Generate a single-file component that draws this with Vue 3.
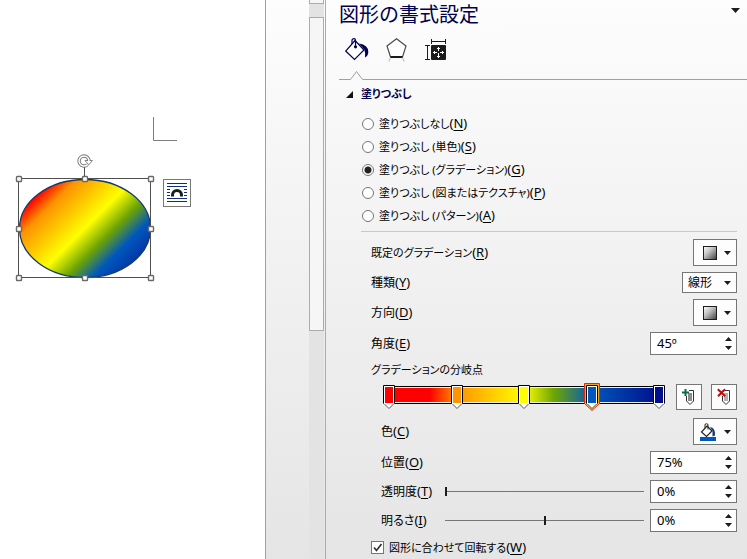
<script setup>
import { ref } from 'vue'

const fillOptions = [
  { id: 'none', label: '塗りつぶしなし', key: 'N' },
  { id: 'solid', label: '塗りつぶし (単色)', key: 'S' },
  { id: 'gradient', label: '塗りつぶし (グラデーション)', key: 'G' },
  { id: 'picture', label: '塗りつぶし (図またはテクスチャ)', key: 'P' },
  { id: 'pattern', label: '塗りつぶし (パターン)', key: 'A' },
]
const fill = ref('gradient')

const stops = [
  { at: 0, color: '#ff0000' },
  { at: 25, color: '#ff9300' },
  { at: 50, color: '#ffff00' },
  { at: 75, color: '#0057bd' },
  { at: 100, color: '#00108c' },
]
const selectedStop = ref(3)

const kind = ref('線形')
const angle = ref('45º')
const position = ref('75%')
const transparency = ref(0)
const brightness = ref(0)
const rotateWithShape = ref(true)

const handles = [
  [19, 179], [85, 179], [151, 179],
  [19, 229], [151, 229],
  [19, 278], [85, 278], [151, 278],
]
</script>

<template>
  <div class="app">
    <main class="page">
      <svg class="drawing" width="200" height="300" viewBox="0 0 200 300" role="img" aria-label="楕円">
        <defs>
          <linearGradient id="rainbow" gradientUnits="userSpaceOnUse" x1="28" y1="171" x2="142" y2="285">
            <stop offset="0" stop-color="#ff0000" />
            <stop offset="0.15" stop-color="#ff0800" />
            <stop offset="0.25" stop-color="#ff9300" />
            <stop offset="0.5" stop-color="#ffff00" />
            <stop offset="0.63" stop-color="#6ea600" />
            <stop offset="0.75" stop-color="#0057bd" />
            <stop offset="1" stop-color="#00108c" />
          </linearGradient>
        </defs>
        <path d="M153.5 117V140.500H177" fill="none" stroke="#7d7d7d" />
        <ellipse cx="85" cy="228.500" rx="65.500" ry="49" fill="url(#rainbow)" stroke="#123a68" stroke-width="1.300" />
        <rect x="18.500" y="178.500" width="132" height="99" fill="none" stroke="#4f4f4f" />
        <path d="M84.500 167V176" stroke="#4f4f4f" />
        <path d="M87.500 164.600A5 5 0 1 1 88.800 159.500V161" fill="none" stroke="#777" stroke-width="3.400" />
        <path d="M85 160.500H92.500L88.800 164.800Z" fill="#fff" stroke="#777" stroke-width="0.900" />
        <path d="M87.500 164.600A5 5 0 1 1 88.800 159.500V161.500" fill="none" stroke="#fff" stroke-width="1.500" />
        <rect
          v-for="([x, y], i) in handles" :key="i"
          :x="x - 2.5" :y="y - 2.5" width="5" height="5" rx="0.800" fill="#fff" stroke="#6a6a6a" stroke-width="1.400"
        />
      </svg>
      <button class="layout-button" type="button" aria-label="レイアウト オプション">
        <svg width="20" height="20" viewBox="0 0 20 20">
          <path d="M0 .5H20M0 3.500H20M0 6.500H3M17 6.500H20M0 9.500H3M17 9.500H20M0 12.500H3M17 12.500H20M0 15.500H20M0 18.500H20" stroke="#0b2f80" />
          <path d="M5.500 13.500V12A4.500 4.500 0 0 1 14.500 12V13.500" fill="none" stroke="#1c1c1c" stroke-width="3" />
        </svg>
      </button>
    </main>

    <div class="gutter"></div>
    <div class="scrollbar">
      <div class="thumb thumb-top"></div>
      <div class="thumb thumb-main"></div>
    </div>

    <aside class="panel">
      <header class="panel-head">
        <h1>図形の書式設定</h1>
        <button class="bare" type="button" aria-label="作業ウィンドウ オプション">
          <svg width="9" height="5" viewBox="0 0 9 5"><path d="M0 0H9L4.500 5Z" fill="#1c1c1c" /></svg>
        </button>
      </header>

      <nav class="tabs">
        <button class="bare" type="button" aria-label="塗りつぶしと線">
          <svg width="24" height="24" viewBox="0 0 24 24">
            <path d="M10 2.500L19 12L9.500 21.500L.7 13Z" fill="#fff" stroke="#00004e" stroke-width="1.200" />
            <path d="M7 6V2.500Q7 .7 9 .7Q10.500 .7 10.500 2.500V8" fill="none" stroke="#00004e" stroke-width="1.200" />
            <circle cx="10.500" cy="8.800" r="1.600" fill="#00004e" />
            <path d="M14 5.500Q23.500 7 23.300 14Q23.300 17.500 20 19.500Q20.700 15 19.300 11.500Z" fill="#00004e" />
          </svg>
        </button>
        <button class="bare" type="button" aria-label="効果">
          <svg width="24" height="24" viewBox="0 0 24 24">
            <path d="M11.500 .8L21 8L17.500 19H5.500L2 8Z" fill="#fff" stroke="#4a4a4a" stroke-width="1.200" />
            <path d="M5.500 19H17.500" stroke="#1c1c1c" stroke-width="2" />
            <path d="M5.200 20L4 23.500M17.800 20L19 23.500" stroke="#b5b5b5" />
          </svg>
        </button>
        <button class="bare" type="button" aria-label="レイアウトとプロパティ">
          <svg width="24" height="24" viewBox="0 0 24 24">
            <path d="M6.500 1V6M20.500 1V6M6.500 3.500H20.500M0 7.500H5M0 21.500H5M2.500 7.500V21.500" fill="none" stroke="#1c1c1c" />
            <rect x="6" y="7" width="15" height="15" rx="1" fill="#1c1c1c" />
            <path d="M13.500 9V13M13.500 15V20M8 14.500H12M15 14.500H19M12 10.500H15M12 18.500H15M9.500 13V16M17.500 13V16" stroke="#fff" />
          </svg>
        </button>
      </nav>
      <div class="tab-line">
        <i class="lead"></i>
        <svg width="13" height="10" viewBox="0 0 13 10"><path d="M0 9.500H.5L6.500 1.500L12.500 9.500H13" fill="none" stroke="#a0a0a0" /></svg>
        <i class="rest"></i>
      </div>

      <h2>
        <svg width="7" height="7" viewBox="0 0 7 7"><path d="M7 0V7H0Z" fill="#111" /></svg>
        塗りつぶし
      </h2>

      <div class="radios" role="radiogroup" aria-label="塗りつぶし">
        <label v-for="o in fillOptions" :key="o.id">
          <input v-model="fill" type="radio" name="fill" :value="o.id">
          <span class="long">{{ o.label }}<span class="key">(<u>{{ o.key }}</u>)</span></span>
        </label>
      </div>

      <hr>

      <div class="fields">
        <div class="row">
          <label class="long" for="preset">既定のグラデーション<span class="key">(<u>R</u>)</span></label>
          <button id="preset" class="drop" type="button">
            <svg class="swatch" width="14" height="14" viewBox="0 0 14 14">
              <defs>
                <linearGradient id="grey" x1="0" y1="0" x2="1" y2="1">
                  <stop offset="0" stop-color="#fff" />
                  <stop offset="0.4" stop-color="#c4c4c4" />
                  <stop offset="1" stop-color="#3c3c3c" />
                </linearGradient>
              </defs>
              <rect x=".5" y=".5" width="13" height="13" fill="url(#grey)" stroke="#1c1c1c" />
            </svg>
            <svg width="7" height="4" viewBox="0 0 7 4"><path d="M0 0H7L3.500 4Z" fill="#1c1c1c" /></svg>
          </button>
        </div>

        <div class="row">
          <label for="kind">種類<span class="key">(<u>Y</u>)</span></label>
          <span class="select">
            <select id="kind" v-model="kind">
              <option>線形</option>
              <option>放射</option>
              <option>四角</option>
            </select>
            <svg width="7" height="4" viewBox="0 0 7 4"><path d="M0 0H7L3.500 4Z" fill="#1c1c1c" /></svg>
          </span>
        </div>

        <div class="row">
          <label for="direction">方向<span class="key">(<u>D</u>)</span></label>
          <button id="direction" class="drop" type="button">
            <svg class="swatch" width="14" height="14" viewBox="0 0 14 14">
              <rect x=".5" y=".5" width="13" height="13" fill="url(#grey)" stroke="#1c1c1c" />
            </svg>
            <svg width="7" height="4" viewBox="0 0 7 4"><path d="M0 0H7L3.500 4Z" fill="#1c1c1c" /></svg>
          </button>
        </div>

        <div class="row">
          <label for="angle">角度<span class="key">(<u>E</u>)</span></label>
          <span class="spin">
            <input id="angle" v-model="angle" type="text">
            <span class="steps">
              <button class="bare" type="button" aria-label="増やす"><svg width="7" height="4" viewBox="0 0 7 4"><path d="M0 4H7L3.500 0Z" fill="#1c1c1c" /></svg></button>
              <button class="bare" type="button" aria-label="減らす"><svg width="7" height="4" viewBox="0 0 7 4"><path d="M0 0H7L3.500 4Z" fill="#1c1c1c" /></svg></button>
            </span>
          </span>
        </div>

        <div class="caption long">グラデーションの分岐点</div>

        <div class="stops-row">
          <div class="track">
            <div class="bar"></div>
            <button
              v-for="(s, i) in stops" :key="s.at" class="bare stop" type="button"
              :style="{ left: s.at + '%' }" :aria-label="'分岐点 ' + (i + 1)" @click="selectedStop = i"
            >
              <svg width="18" height="30" viewBox="0 0 18 30">
                <template v-if="i === selectedStop">
                  <path d="M1.500 1.500H16.500V21.500L9 28.500L1.500 21.500Z" fill="#ffd27a" stroke="#d82a10" />
                  <path d="M2.500 2.500H15.500V21L9 27L2.500 21Z" fill="none" stroke="#f3a41c" />
                </template>
                <path d="M3.500 21L9 26.500L14.500 21Z" fill="#fff" stroke="#444" stroke-width="0.900" />
                <path d="M3.500 21.500V3.500H14.500V21.500" fill="#fff" stroke="#000" />
                <rect x="4" y="20" width="10" height="2" fill="#fff" />
                <rect x="5" y="5" width="8" height="16" :fill="s.color" />
              </svg>
            </button>
          </div>
          <button class="tool" type="button" aria-label="グラデーションの分岐点を追加">
            <svg width="14" height="18" viewBox="0 0 14 18">
              <path d="M7 2.500H11.500V13L8 16.500L4.500 13V8" fill="#fff" stroke="#333" />
              <rect x="6" y="5" width="4" height="8" fill="#8c8c8c" />
              <path d="M3.500 1V8M0 4.500H7" stroke="#0b6b4c" stroke-width="2" />
            </svg>
          </button>
          <button class="tool" type="button" aria-label="グラデーションの分岐点を削除">
            <svg width="14" height="18" viewBox="0 0 14 18">
              <path d="M8 2.500H12.500V13L9 16.500L5.500 13V8" fill="#fff" stroke="#333" />
              <rect x="7" y="5" width="4" height="8" fill="#b0b0b0" />
              <path d="M.8 1.200L8.200 8.200M8 1.200L1 8.200" stroke="#c00a0a" stroke-width="2" />
            </svg>
          </button>
        </div>

        <div class="row sub">
          <label for="color">色<span class="key">(<u>C</u>)</span></label>
          <button id="color" class="drop" type="button">
            <svg width="18" height="18" viewBox="0 0 18 18">
              <path d="M8 3L13 8L7.500 13.500L2.500 9Z" fill="#fff" stroke="#222" stroke-width="1.200" />
              <path d="M6 5V2Q6 .7 7.500 .7Q9 .7 9 2V6.500" fill="none" stroke="#222" />
              <path d="M11 4Q16.500 4.500 16 12.500L13.500 13.500L13.500 8Z" fill="#123a7c" />
              <rect x="1" y="14" width="16" height="4" fill="#0057bd" />
            </svg>
            <svg width="7" height="4" viewBox="0 0 7 4"><path d="M0 0H7L3.500 4Z" fill="#1c1c1c" /></svg>
          </button>
        </div>

        <div class="row sub">
          <label for="position">位置<span class="key">(<u>O</u>)</span></label>
          <span class="spin">
            <input id="position" v-model="position" type="text">
            <span class="steps">
              <button class="bare" type="button" aria-label="増やす"><svg width="7" height="4" viewBox="0 0 7 4"><path d="M0 4H7L3.500 0Z" fill="#1c1c1c" /></svg></button>
              <button class="bare" type="button" aria-label="減らす"><svg width="7" height="4" viewBox="0 0 7 4"><path d="M0 0H7L3.500 4Z" fill="#1c1c1c" /></svg></button>
            </span>
          </span>
        </div>

        <div class="row sub">
          <label class="slider-label" for="transparency">透明度<span class="key">(<u>T</u>)</span></label>
          <input id="transparency" v-model.number="transparency" class="slider" type="range" min="0" max="100">
          <span class="spin">
            <input type="text" :value="transparency + '%'" aria-label="透明度">
            <span class="steps">
              <button class="bare" type="button" aria-label="増やす"><svg width="7" height="4" viewBox="0 0 7 4"><path d="M0 4H7L3.500 0Z" fill="#1c1c1c" /></svg></button>
              <button class="bare" type="button" aria-label="減らす"><svg width="7" height="4" viewBox="0 0 7 4"><path d="M0 0H7L3.500 4Z" fill="#1c1c1c" /></svg></button>
            </span>
          </span>
        </div>

        <div class="row sub">
          <label class="slider-label" for="brightness">明るさ<span class="key">(<u>I</u>)</span></label>
          <input id="brightness" v-model.number="brightness" class="slider" type="range" min="-100" max="100">
          <span class="spin">
            <input type="text" :value="brightness + '%'" aria-label="明るさ">
            <span class="steps">
              <button class="bare" type="button" aria-label="増やす"><svg width="7" height="4" viewBox="0 0 7 4"><path d="M0 4H7L3.500 0Z" fill="#1c1c1c" /></svg></button>
              <button class="bare" type="button" aria-label="減らす"><svg width="7" height="4" viewBox="0 0 7 4"><path d="M0 0H7L3.500 4Z" fill="#1c1c1c" /></svg></button>
            </span>
          </span>
        </div>

        <label class="check">
          <span class="box">
            <input v-model="rotateWithShape" type="checkbox">
            <svg v-if="rotateWithShape" width="13" height="13" viewBox="0 0 13 13"><path d="M3 6.500L5.500 9.500L10.500 3" fill="none" stroke="#333" stroke-width="1.700" /></svg>
          </span>
          <span class="long">図形に合わせて回転する<span class="key">(<u>W</u>)</span></span>
        </label>
      </div>
    </aside>
  </div>
</template>

<style>
body {
  margin: 0;
}
</style>

<style scoped>
.app {
  display: grid;
  grid-template-columns: 265fr 44px 16px 422fr;
  min-height: 100vh;
  background: linear-gradient(#fdfdfd, #f3f3f3 40%, #e5e5e5);
  font: 12px/18px "Noto Sans", "Noto Sans CJK JP", sans-serif;
  font-feature-settings: "palt";
  color: #000;
}
.app *,
.app *::before {
  box-sizing: border-box;
}
button,
input,
select {
  margin: 0;
  padding: 0;
  font: inherit;
  color: inherit;
}
svg {
  display: block;
  flex: none;
}
.bare {
  display: block;
  border: 0;
  background: none;
}
.page {
  position: relative;
  background: #fff;
}
.layout-button {
  position: absolute;
  left: 163px;
  top: 179px;
  display: grid;
  place-items: center;
  width: 28px;
  height: 28px;
  border: 1px solid #777;
  background: #fff;
}
.gutter {
  border-left: 1px solid #a0a0a0;
}
.scrollbar {
  display: flex;
  flex-direction: column;
  gap: 13px;
  margin-right: 1px;
  background: #e3e3e3;
}
.thumb {
  border: 1px solid #ababab;
  background: #f6f6f6;
}
.thumb-top {
  height: 4px;
  border-top: 0;
}
.thumb-main {
  height: 314px;
}
.panel {
  border-left: 1px solid #ababab;
}
.panel-head {
  display: flex;
  justify-content: space-between;
  align-items: center;
  height: 30px;
  padding: 0 7px 0 13px;
}
.panel-head .bare {
  padding-bottom: 9px;
}
h1 {
  margin: 0;
  font-size: 20px;
  line-height: 30px;
  font-weight: 400;
  font-feature-settings: normal;
  color: #00004e;
}
.tabs {
  display: flex;
  gap: 16px;
  padding: 8px 0 8px 19px;
}
.tab-line {
  display: flex;
  align-items: flex-end;
  padding-left: 13px;
}
.lead,
.rest {
  border-bottom: 1px solid #a0a0a0;
}
.lead {
  width: 11px;
}
.rest {
  flex: 1;
}
h2 {
  display: flex;
  align-items: center;
  gap: 8px;
  margin: 4px 0 8px;
  padding-left: 20px;
  font-size: 11px;
  line-height: 20px;
  font-weight: 700;
  color: #00004e;
}
.long {
  font-size: 11px;
}
.key {
  font-size: 13px;
}
u {
  text-underline-offset: 2px;
}
.radios {
  display: grid;
  padding-left: 36px;
}
.radios label {
  display: flex;
  align-items: center;
  gap: 5px;
  height: 23px;
}
.radios input {
  appearance: none;
  width: 12px;
  height: 12px;
  border: 1px solid #767676;
  border-radius: 50%;
  background: #fff;
}
.radios input:checked {
  background: radial-gradient(#222 3px, #fff 4px);
}
hr {
  height: 1px;
  margin: 4px 10px 7px 35px;
  border: 0;
  background: #c8c8c8;
}
.fields {
  display: grid;
  gap: 6px;
  padding: 0 10px 3px 45px;
}
.row {
  display: flex;
  align-items: center;
  justify-content: space-between;
}
.sub {
  padding-left: 10px;
}
.drop {
  display: flex;
  align-items: center;
  justify-content: flex-end;
  gap: 7px;
  width: 44px;
  height: 27px;
  padding-right: 5px;
  border: 1px solid #767676;
  background: #fdfdfd;
}
.select {
  display: grid;
  grid-template-columns: 1fr;
  align-items: center;
  width: 55px;
  height: 21px;
  border: 1px solid #767676;
  background: #fdfdfd;
}
.select select,
.select svg {
  grid-area: 1 / 1;
}
.select select {
  appearance: none;
  height: 19px;
  padding-left: 5px;
  border: 0;
  background: none;
}
.select svg {
  justify-self: end;
  margin-right: 5px;
  pointer-events: none;
}
.spin {
  display: flex;
  width: 87px;
  height: 23px;
  border: 1px solid #767676;
  background: #fff;
}
.spin input {
  flex: 1;
  min-width: 0;
  padding: 0 0 2px 6px;
  border: 0;
  background: none;
  font-size: 13px;
}
.steps {
  display: grid;
  gap: 5px;
  align-content: center;
  padding-right: 4px;
}
.caption {
  line-height: 17px;
}
.stops-row {
  display: flex;
  gap: 9px;
  height: 28px;
}
.track {
  position: relative;
  flex: 1;
  margin: 0 8px 0 18px;
}
.bar {
  height: 18px;
  margin-top: 2px;
  padding: 1px 0;
  border: solid #000;
  border-width: 1px 0;
  background: linear-gradient(90deg, #f00, #f00 15%, #ff9300 25%, #ff0 50%, #6ea600 61%, #0057bd 75%, #00108c) content-box #fff;
}
.stop {
  position: absolute;
  top: -2px;
  transform: translateX(-50%);
}
.tool {
  display: grid;
  place-items: center;
  width: 26px;
  height: 26px;
  border: 1px solid #767676;
  background: #fdfdfd;
}
.slider-label {
  width: 64px;
}
.slider {
  appearance: none;
  flex: 1;
  min-width: 0;
  height: 11px;
  margin-right: 6px;
  background: linear-gradient(#767676, #767676) center / 100% 1px no-repeat;
}
.slider::-webkit-slider-thumb {
  appearance: none;
  width: 2px;
  height: 9px;
  background: #1c1c1c;
}
.check {
  display: flex;
  align-items: center;
  gap: 5px;
  height: 18px;
}
.box {
  display: grid;
}
.box input,
.box svg {
  grid-area: 1 / 1;
}
.box svg {
  pointer-events: none;
}
.box input {
  appearance: none;
  width: 13px;
  height: 13px;
  border: 1px solid #767676;
  background: #fff;
}
</style>
